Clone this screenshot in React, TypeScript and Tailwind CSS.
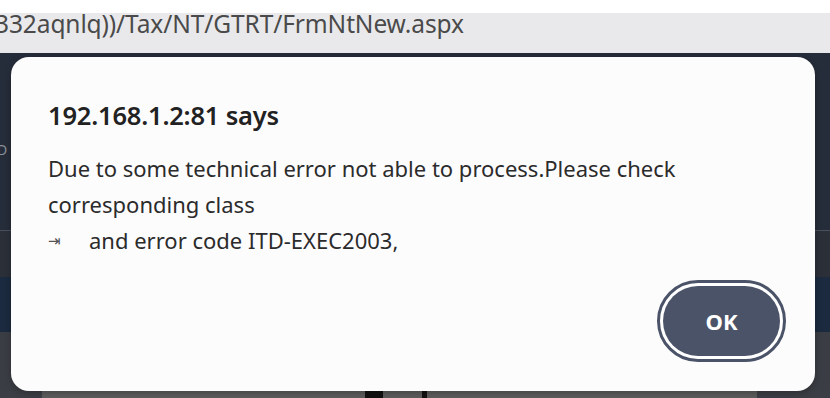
import React from "react";

export default function App() {
  return (
    <div className="w-[830px] h-[398px] overflow-hidden relative bg-[#262d3a]" style={{ fontFamily: '"Noto Sans", "Open Sans", sans-serif' }}>
      {/* top white strip */}
      <div className="h-[13px] bg-white" />
      {/* address bar */}
      <div className="h-[40px] bg-[#e9e9ec] overflow-hidden flex items-start">
        <span className="ml-[-5px] mt-[-7px] text-[24.5px] tracking-[-0.1px] text-[#4a4a4a] whitespace-nowrap">
          332aqnlq))/Tax/NT/GTRT/FrmNtNew.aspx
        </span>
      </div>
      {/* background page */}
      <div className="flex flex-col h-[345px]">
        <div className="h-[177px] bg-[#262d3a] relative">
          <span className="absolute left-[-3px] top-[86px] text-[14px] text-[#8a8f99]">D</span>
        </div>
        <div className="h-[1px] bg-[#4a505c]" />
        <div className="h-[46px] bg-[#2a2f38]" />
        <div className="h-[55px] bg-[#1b2a3e]" />
        <div className="h-[59px] bg-[#3a3d43]" />
        <div className="flex-1 bg-[#3b3e44] flex">
          <div className="w-[42px]" />
          <div className="flex-1 bg-[#5c5c5c] relative">
            <div className="absolute left-[323px] top-0 w-[18px] h-full bg-[#111]" />
            <div className="absolute left-[380px] top-0 w-[5px] h-full bg-[#111]" />
          </div>
          <div className="w-[73px]" />
        </div>
      </div>

      {/* dialog */}
      <div className="absolute left-[11px] top-[57px] w-[804px] h-[334px] rounded-[18px] bg-[#fdfcfd] shadow-[0_2px_6px_rgba(0,0,0,0.25)]">
        <div className="pl-[37px] pt-[38px]">
          <div className="text-[25.5px] leading-[40px] font-semibold text-[#222] tracking-[-0.2px]">192.168.1.2:81 says</div>
          <div className="mt-[15px] text-[22px] leading-[36px] text-[#2b2b2b]">
            <div>Due to some technical error not able to process.Please check</div>
            <div>corresponding class</div>
            <div className="flex items-center">
              <span className="w-[41px] text-[15px] text-[#555]">⇥</span>
              <span>and error code ITD-EXEC2003,</span>
            </div>
          </div>
        </div>
        <div className="absolute left-[646px] top-[223px] w-[129px] h-[82px] rounded-full border-[3px] border-[#4b5368] bg-white p-[3px]">
          <div className="w-full h-full rounded-full bg-[#4b5368] flex items-center justify-center text-white text-[22px] font-bold">OK</div>
        </div>
      </div>
    </div>
  );
}
